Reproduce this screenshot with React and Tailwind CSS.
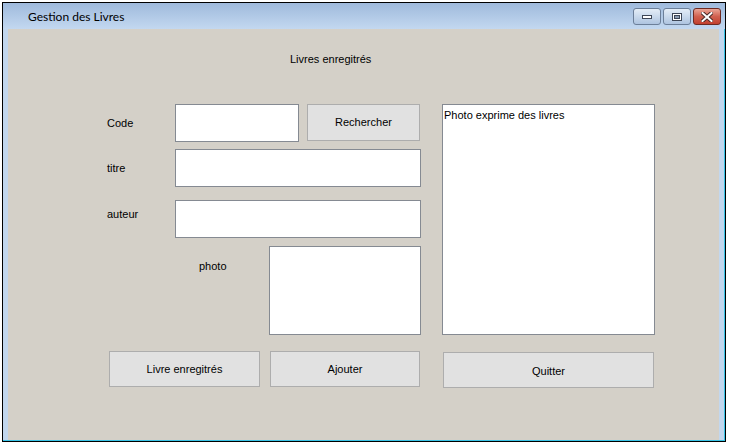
import React from "react";

const F = { fontFamily: '"Liberation Sans", Arial, sans-serif' };

function Input({ className }) {
  return <div className={"bg-white border border-[#858a92] " + className} />;
}

function Btn({ children, className }) {
  return (
    <div
      className={
        "bg-[#e1e1e1] border border-[#adadad] flex items-center justify-center text-[11px] leading-[13px] text-black " +
        className
      }
    >
      {children}
    </div>
  );
}

function CapBtn({ kind }) {
  if (kind === "close") {
    return (
      <div className="w-[28px] h-[17px] rounded-[3px] border border-[#6e2a22] bg-gradient-to-b from-[#e9a597] via-[#d0604f] to-[#c2402f] flex items-center justify-center">
        <svg width="12" height="10" viewBox="0 0 12 10">
          <path
            d="M1.5 1 L10.5 9 M10.5 1 L1.5 9"
            stroke="#4a2a28"
            strokeWidth="4"
            strokeLinecap="square"
          />
          <path
            d="M1.5 1 L10.5 9 M10.5 1 L1.5 9"
            stroke="#ffffff"
            strokeWidth="2"
            strokeLinecap="square"
          />
        </svg>
      </div>
    );
  }
  return (
    <div className="w-[28px] h-[17px] rounded-[3px] border border-[#6c7f99] bg-gradient-to-b from-[#e4edf7] via-[#c9d9ec] to-[#aec4e0] flex items-center justify-center">
      {kind === "min" ? (
        <svg width="12" height="6" viewBox="0 0 12 6">
          <rect x="1.5" y="1.5" width="9" height="3" fill="#ffffff" stroke="#3d4656" strokeWidth="1" />
        </svg>
      ) : (
        <svg width="12" height="10" viewBox="0 0 12 10">
          <rect x="1.5" y="1.5" width="9" height="7" fill="#ffffff" stroke="#3d4656" strokeWidth="1" />
          <rect x="3.5" y="3.5" width="5" height="3" fill="#8a9ab0" stroke="#3d4656" strokeWidth="1" />
        </svg>
      )}
    </div>
  );
}

export default function App() {
  return (
    <div className="w-[729px] h-[446px] bg-white pt-[2px] pl-[2px] overflow-hidden">
      <div className="w-[724px] h-[440px] border border-black bg-[#c2d7ee] flex flex-col">
        {/* Title bar */}
        <div className="h-[26px] shrink-0 bg-gradient-to-b from-[#9fbadc] to-[#c3d8f0] flex items-start justify-between pl-[25px] pr-[4px] pt-[5px]">
          <div
            className="text-[12px] leading-[16px] text-black pt-[1px]"
            style={{ fontFamily: '"Lato", "Open Sans", sans-serif' }}
          >
            Gestion des Livres
          </div>
          <div className="flex gap-[2px]">
            <CapBtn kind="min" />
            <CapBtn kind="max" />
            <CapBtn kind="close" />
          </div>
        </div>
        {/* Body with frame */}
        <div className="flex-1 flex pl-[5px] border-r border-b border-r-[#38c3e6] border-b-[#38c3e6]">
          <div className="w-[711px] h-full bg-[#d4d0c8] text-[11px] text-black" style={F}>
            <p className="pt-[24px] pl-[282px] leading-[13px] h-[37px]">Livres enregitrés</p>
            <div className="mt-[38px] flex pl-[99px]">
              {/* Left column */}
              <div className="w-[314px] flex flex-col">
                <div className="flex h-[38px]">
                  <div className="w-[68px] pt-[13px] leading-[13px]">Code</div>
                  <Input className="w-[124px] h-[38px]" />
                  <Btn className="ml-[8px] w-[113px] h-[37px]">Rechercher</Btn>
                </div>
                <div className="flex h-[38px] mt-[7px]">
                  <div className="w-[68px] pt-[13px] leading-[13px]">titre</div>
                  <Input className="w-[246px] h-[38px]" />
                </div>
                <div className="flex h-[38px] mt-[13px]">
                  <div className="w-[68px] pt-[8px] leading-[13px]">auteur</div>
                  <Input className="w-[246px] h-[38px]" />
                </div>
                <div className="flex h-[89px] mt-[8px]">
                  <div className="w-[162px] pl-[92px] pt-[14px] leading-[13px]">photo</div>
                  <Input className="w-[152px] h-[89px]" />
                </div>
                <div className="flex mt-[16px] pl-[2px] gap-[10px]">
                  <Btn className="w-[151px] h-[36px]">Livre enregitrés</Btn>
                  <Btn className="w-[150px] h-[36px]">Ajouter</Btn>
                </div>
              </div>
              {/* Right column */}
              <div className="ml-[21px] flex flex-col">
                <div className="w-[213px] h-[231px] bg-white border border-[#858a92] pl-[1px] pt-[4px] leading-[13px]">
                  Photo exprime des livres
                </div>
                <Btn className="mt-[17px] ml-[1px] w-[211px] h-[36px] pt-[2px]">Quitter</Btn>
              </div>
            </div>
          </div>
          <div className="flex-1" />
        </div>
      </div>
    </div>
  );
}
